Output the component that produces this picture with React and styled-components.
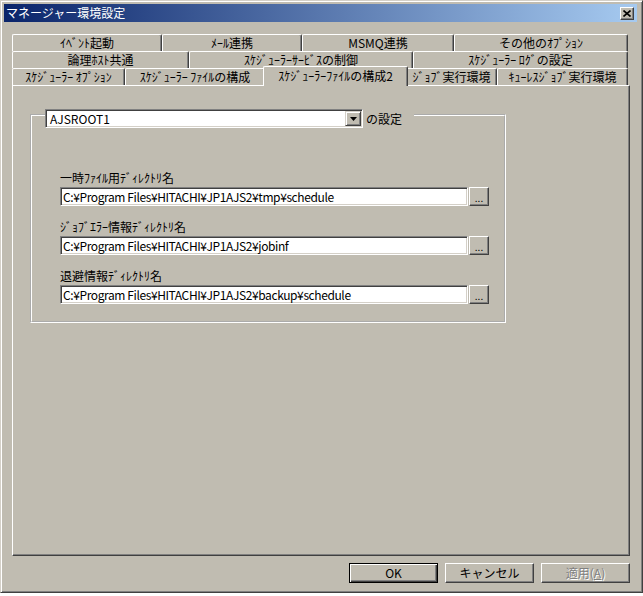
import React from 'react';
import styled, { createGlobalStyle } from 'styled-components';

const FACE = '#C0BCB1';

const GlobalStyle = createGlobalStyle`
  html, body { margin: 0; padding: 0; background: #ffffff; }
  body {
    font-family: "MS UI Gothic", "Noto Sans CJK JP", "Liberation Sans", sans-serif;
    font-size: 12px;
    color: #000;
  }
`;

const Window = styled.div`
  box-sizing: border-box;
  width: 643px;
  height: 593px;
  background: ${FACE};
  border: 1px solid;
  border-color: #d4d0c8 #404040 #404040 #d4d0c8;
  box-shadow: inset 1px 1px #ffffff, inset -1px -1px #808080;
  padding: 3px;
  display: flex;
  flex-direction: column;
`;

const TitleBar = styled.div`
  height: 18px;
  margin-right: 2px;
  display: flex;
  align-items: center;
  justify-content: space-between;
  padding: 0 3px 0 2px;
  background: linear-gradient(to right, #0a246a, #a6caf0);
  color: #ffffff;
  line-height: 14px;
`;

const TitleText = styled.span`
  white-space: nowrap;
`;

const CloseButton = styled.div`
  box-sizing: border-box;
  width: 14px;
  height: 13px;
  background: ${FACE};
  border: 1px solid;
  border-color: #ffffff #404040 #404040 #ffffff;
  box-shadow: inset -1px -1px #808080;
  display: flex;
  align-items: center;
  justify-content: center;
`;

const Body = styled.div`
  flex: 1;
  display: flex;
  flex-direction: column;
  padding: 12px 9px 0 8px;
`;

const TabStrip = styled.div`
  width: 616px;
  display: flex;
  flex-direction: column;
`;

const TabRow = styled.div`
  height: 17px;
  display: flex;
  align-items: flex-start;
`;

const Tab = styled.div`
  box-sizing: border-box;
  flex: 0 0 ${p => p.$w + (p.$active ? 4 : 0)}px;
  height: ${p => (p.$active ? 20 : 17)}px;
  margin: ${p => (p.$active ? '-2px -2px 0' : '0')};
  position: relative;
  z-index: ${p => (p.$active ? 2 : 'auto')};
  background: ${FACE};
  border-top: 1px solid #ffffff;
  border-left: 1px solid #ffffff;
  border-right: 1px solid #404040;
  border-radius: 2px 2px 0 0;
  box-shadow: inset -1px 0 #808080;
  display: flex;
  align-items: center;
  justify-content: center;
  padding-bottom: ${p => (p.$active ? 1 : 0)}px;
  line-height: 14px;
  white-space: nowrap;
`;

const Panel = styled.div`
  box-sizing: border-box;
  height: 471px;
  border-top: 1px solid #ffffff;
  border-left: 1px solid #ffffff;
  border-right: 1px solid #404040;
  border-bottom: 1px solid #404040;
  box-shadow: inset -1px -1px #808080;
  padding: 23px 0 0 17px;
`;

const Group = styled.fieldset`
  box-sizing: border-box;
  margin: 0;
  padding: 0;
  min-width: 0;
  width: 476px;
  height: 214px;
  border: 2px groove #ffffff;
`;

const GroupLegend = styled.legend`
  margin-left: 13px;
  padding: 0 12px 0 0;
  height: 12px;
`;

const LegendInner = styled.div`
  height: 19px;
  display: flex;
  align-items: center;
  gap: 3px;
`;

const Combo = styled.div`
  box-sizing: border-box;
  width: 318px;
  height: 19px;
  background: #ffffff;
  border: 1px solid;
  border-color: #808080 #ffffff #ffffff #808080;
  box-shadow: inset 1px 1px #404040, inset -1px -1px #d4d0c8;
  padding: 1px 1px 1px 4px;
  display: flex;
  align-items: center;
  justify-content: space-between;
  line-height: 14px;
`;

const DropButton = styled.div`
  box-sizing: border-box;
  width: 16px;
  height: 15px;
  background: ${FACE};
  border: 1px solid;
  border-color: #d4d0c8 #404040 #404040 #d4d0c8;
  box-shadow: inset 1px 1px #ffffff, inset -1px -1px #808080;
  display: flex;
  align-items: center;
  justify-content: center;
`;

const LegendText = styled.span`
  line-height: 14px;
  white-space: nowrap;
`;

const GroupContent = styled.div`
  padding: 50px 0 0 28px;
  display: flex;
  flex-direction: column;
  gap: 14px;
`;

const Field = styled.div`
  display: flex;
  flex-direction: column;
  gap: 2px;
`;

const FieldLabel = styled.div`
  height: 14px;
  line-height: 14px;
  white-space: nowrap;
`;

const FieldRow = styled.div`
  display: flex;
  align-items: flex-start;
  gap: 1px;
`;

const TextBox = styled.div`
  box-sizing: border-box;
  width: 408px;
  height: 19px;
  background: #ffffff;
  border: 1px solid;
  border-color: #808080 #ffffff #ffffff #808080;
  box-shadow: inset 1px 1px #404040, inset -1px -1px #d4d0c8;
  padding: 0 0 0 2px;
  display: flex;
  align-items: center;
  line-height: 14px;
  letter-spacing: -0.4px;
  white-space: nowrap;
  overflow: hidden;
`;

const BrowseButton = styled.div`
  box-sizing: border-box;
  width: 20px;
  height: 19px;
  background: ${FACE};
  border: 1px solid;
  border-color: #ffffff #404040 #404040 #ffffff;
  box-shadow: inset -1px -1px #808080;
  display: flex;
  align-items: center;
  justify-content: center;
  font-size: 10px;
  line-height: 10px;
  padding-top: 2px;
`;

const Footer = styled.div`
  margin-top: 7px;
  display: flex;
  justify-content: flex-end;
  gap: 7px;
`;

const Button = styled.div`
  box-sizing: border-box;
  width: 89px;
  height: 20px;
  background: ${FACE};
  border: 1px solid;
  border-color: ${p => (p.$default ? '#000000' : '#ffffff #404040 #404040 #ffffff')};
  box-shadow: ${p =>
    p.$default
      ? 'inset 1px 1px #ffffff, inset -1px -1px #404040, inset -2px -2px #808080'
      : 'inset -1px -1px #808080'};
  display: flex;
  align-items: center;
  justify-content: center;
  line-height: 14px;
  color: ${p => (p.$disabled ? '#808080' : '#000000')};
  text-shadow: ${p => (p.$disabled ? '1px 1px #ffffff' : 'none')};
  white-space: nowrap;
`;

const tabRows = [
  [
    { label: 'ｲﾍﾞﾝﾄ起動', w: 150 },
    { label: 'ﾒｰﾙ連携', w: 140 },
    { label: 'MSMQ連携', w: 152 },
    { label: 'その他のｵﾌﾟｼｮﾝ', w: 174 },
  ],
  [
    { label: '論理ﾎｽﾄ共通', w: 177 },
    { label: 'ｽｹｼﾞｭｰﾗｰｻｰﾋﾞｽの制御', w: 224 },
    { label: 'ｽｹｼﾞｭｰﾗｰ ﾛｸﾞの設定', w: 215 },
  ],
  [
    { label: 'ｽｹｼﾞｭｰﾗｰ ｵﾌﾟｼｮﾝ', w: 113 },
    { label: 'ｽｹｼﾞｭｰﾗｰ ﾌｧｲﾙの構成', w: 140 },
    { label: 'ｽｹｼﾞｭｰﾗｰﾌｧｲﾙの構成2', w: 141, active: true },
    { label: 'ｼﾞｮﾌﾞ実行環境', w: 91 },
    { label: 'ｷｭｰﾚｽｼﾞｮﾌﾞ実行環境', w: 131 },
  ],
];

const fields = [
  { label: '一時ﾌｧｲﾙ用ﾃﾞｨﾚｸﾄﾘ名', value: 'C:¥Program Files¥HITACHI¥JP1AJS2¥tmp¥schedule' },
  { label: 'ｼﾞｮﾌﾞｴﾗｰ情報ﾃﾞｨﾚｸﾄﾘ名', value: 'C:¥Program Files¥HITACHI¥JP1AJS2¥jobinf' },
  { label: '退避情報ﾃﾞｨﾚｸﾄﾘ名', value: 'C:¥Program Files¥HITACHI¥JP1AJS2¥backup¥schedule' },
];

export default function App() {
  return (
    <>
      <GlobalStyle />
      <Window>
        <TitleBar>
          <TitleText>マネージャー環境設定</TitleText>
          <CloseButton>
            <svg width="8" height="7" viewBox="0 0 8 7">
              <path d="M0.5 0.5 L7.5 6.5 M7.5 0.5 L0.5 6.5" stroke="#000" strokeWidth="1.6" />
            </svg>
          </CloseButton>
        </TitleBar>
        <Body>
          <TabStrip>
            {tabRows.map((row, i) => (
              <TabRow key={i}>
                {row.map(t => (
                  <Tab key={t.label} $w={t.w} $active={t.active}>
                    {t.label}
                  </Tab>
                ))}
              </TabRow>
            ))}
          </TabStrip>
          <Panel>
            <Group>
              <GroupLegend>
                <LegendInner>
                  <Combo>
                    <span>AJSROOT1</span>
                    <DropButton>
                      <svg width="7" height="4" viewBox="0 0 7 4">
                        <path d="M0 0 H7 L3.5 4 Z" fill="#000" />
                      </svg>
                    </DropButton>
                  </Combo>
                  <LegendText>の設定</LegendText>
                </LegendInner>
              </GroupLegend>
              <GroupContent>
                {fields.map(f => (
                  <Field key={f.label}>
                    <FieldLabel>{f.label}</FieldLabel>
                    <FieldRow>
                      <TextBox>{f.value}</TextBox>
                      <BrowseButton>...</BrowseButton>
                    </FieldRow>
                  </Field>
                ))}
              </GroupContent>
            </Group>
          </Panel>
          <Footer>
            <Button $default>OK</Button>
            <Button>キャンセル</Button>
            <Button $disabled>
              <span>
                適用(<u>A</u>)
              </span>
            </Button>
          </Footer>
        </Body>
      </Window>
    </>
  );
}
